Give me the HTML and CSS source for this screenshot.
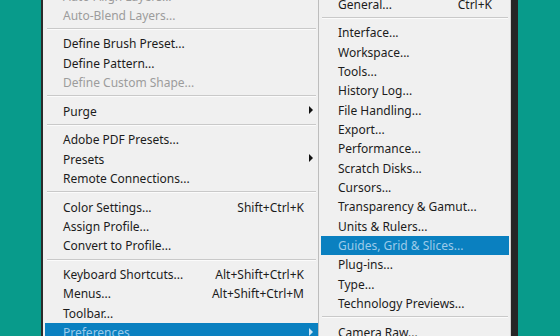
FILE: index.html
```html
<!DOCTYPE html>
<html lang="en">
<head>
    <meta charset="UTF-8">
    <meta name="viewport" content="width=device-width, initial-scale=1.0">
    <title>Edit menu - Preferences</title>
    <link rel="stylesheet" href="styles.css">
</head>
<body>
    <div class="menus">
        <!-- Edit menu (bottom part) -->
        <ul class="menu edit-menu">
            <li class="item disabled"><span class="label">Auto-Align Layers...</span></li>
            <li class="item disabled"><span class="label">Auto-Blend Layers...</span></li>
            <li class="sep"></li>
            <li class="item"><span class="label">Define Brush Preset...</span></li>
            <li class="item"><span class="label">Define Pattern...</span></li>
            <li class="item disabled"><span class="label">Define Custom Shape...</span></li>
            <li class="sep"></li>
            <li class="item"><span class="label">Purge</span><span class="arrow"></span></li>
            <li class="sep"></li>
            <li class="item"><span class="label">Adobe PDF Presets...</span></li>
            <li class="item"><span class="label">Presets</span><span class="arrow"></span></li>
            <li class="item"><span class="label">Remote Connections...</span></li>
            <li class="sep"></li>
            <li class="item"><span class="label">Color Settings...</span><span class="key">Shift+Ctrl+K</span></li>
            <li class="item"><span class="label">Assign Profile...</span></li>
            <li class="item"><span class="label">Convert to Profile...</span></li>
            <li class="sep"></li>
            <li class="item"><span class="label">Keyboard Shortcuts...</span><span class="key">Alt+Shift+Ctrl+K</span></li>
            <li class="item"><span class="label">Menus...</span><span class="key">Alt+Shift+Ctrl+M</span></li>
            <li class="item"><span class="label">Toolbar...</span></li>
            <li class="item active"><span class="label">Preferences</span><span class="arrow"></span></li>
        </ul>

        <!-- Preferences submenu -->
        <ul class="menu sub-menu">
            <li class="item"><span class="label">General...</span><span class="key">Ctrl+K</span></li>
            <li class="sep"></li>
            <li class="item"><span class="label">Interface...</span></li>
            <li class="item"><span class="label">Workspace...</span></li>
            <li class="item"><span class="label">Tools...</span></li>
            <li class="item"><span class="label">History Log...</span></li>
            <li class="item"><span class="label">File Handling...</span></li>
            <li class="item"><span class="label">Export...</span></li>
            <li class="item"><span class="label">Performance...</span></li>
            <li class="item"><span class="label">Scratch Disks...</span></li>
            <li class="item"><span class="label">Cursors...</span></li>
            <li class="item"><span class="label">Transparency &amp; Gamut...</span></li>
            <li class="item"><span class="label">Units &amp; Rulers...</span></li>
            <li class="item active"><span class="label">Guides, Grid &amp; Slices...</span></li>
            <li class="item"><span class="label">Plug-ins...</span></li>
            <li class="item"><span class="label">Type...</span></li>
            <li class="item"><span class="label">Technology Previews...</span></li>
            <li class="sep"></li>
            <li class="item"><span class="label">Camera Raw...</span></li>
        </ul>
    </div>
</body>
</html>
```

FILE: styles.css
```css
/* Photoshop-style menu on a teal desktop */
body {
    margin: 0;
    height: 336px;
    overflow: hidden;
    background: #089b8b;
    font-family: "Noto Sans", "Open Sans", sans-serif;
    font-size: 12px;
    color: #1c1c1c;
}

.menus { display: flex; align-items: flex-start; padding-left: 41px; }

.menu {
    list-style: none;
    margin: 0;
    background: #f0f0f0;
}

.edit-menu {
    width: 275px;
    margin-top: -13.67px;
    padding: 0 0 0 2px;
    border-left: 2px solid #2b2b2b;
    box-sizing: border-box;
    width: 277px;
}

.sub-menu {
    width: 193px;
    box-sizing: border-box;
    margin-top: -8.33px;
    padding: 3px 1px 3px 2px;
    border-left: 1px solid #bdbdbd;
    border-right: 1px solid #cfcfcf;
    box-shadow: 7px 0 0 #252525;
    min-height: 360px;
}

.item {
    display: flex;
    align-items: center;
    height: 19.33px;
    white-space: nowrap;
}

.edit-menu .item { padding: 0 0 0 18px; }
.sub-menu .item { padding: 0 17px 0 17px; }

.label { flex: 1; }

.key { text-align: right; }
.edit-menu .key { margin-right: 14px; }

.item.disabled { color: #9c9c9c; }

.item.active { background: #0a80c0; color: #9ccbea; }

.arrow {
    width: 0;
    height: 0;
    margin: 0 5px 2px 0;
    border-left: 4px solid #111;
    border-top: 4px solid transparent;
    border-bottom: 4px solid transparent;
}
.item.active .arrow { border-left-color: #cfe6f5; }

.sep {
    height: 9.33px;
    box-sizing: border-box;
    padding-top: 3px;
}
.sep::before {
    content: "";
    display: block;
    height: 1px;
    background: #c9c9c9;
    border-bottom: 1px solid #fbfbfb;
}
.edit-menu .sep::before { margin: 0 2px; }
.sub-menu .sep::before { margin: 0 1px; }
```
